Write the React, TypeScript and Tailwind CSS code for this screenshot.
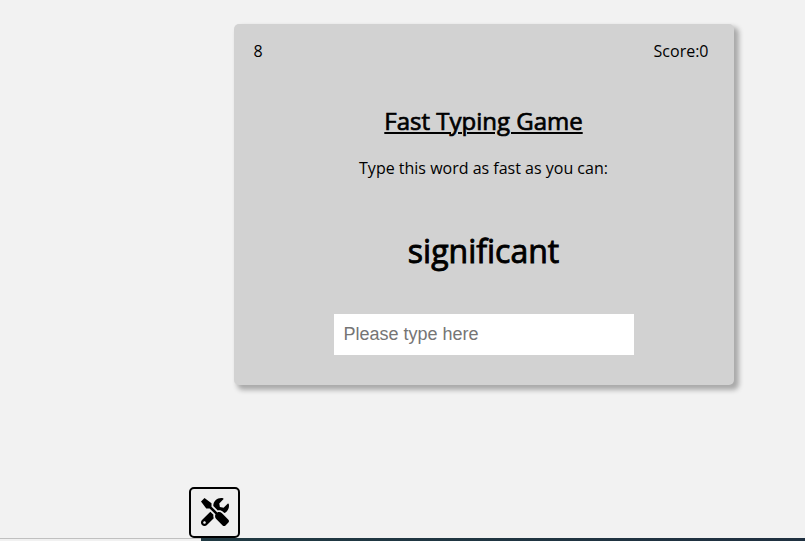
import { FaTools } from "react-icons/fa";

export default function App() {
  return (
    <div className="flex h-[541px] w-[805px] flex-col overflow-hidden bg-[#f2f2f2] pt-6 font-['Open_Sans',sans-serif] text-black">
      <main className="ml-[234px] flex h-[361px] w-[500px] shrink-0 flex-col items-center rounded-[5px] bg-[#d2d2d2] shadow-[4px_4px_5px_1px_rgba(0,0,0,0.3)]">
        <div className="flex w-full justify-between pt-[15px] pr-[25.5px] pl-[19.5px] text-base leading-6 font-normal">
          <span>8</span>
          <span>Score:0</span>
        </div>
        <h2 className="mt-[41px] pr-px text-2xl leading-[33px] font-normal [-webkit-text-stroke:0.7px_black]">
          <span className="underline decoration-2 underline-offset-2">Fast Typing Game</span>
        </h2>
        <p className="mt-[19px] pr-px text-base leading-6">Type this word as fast as you can:</p>
        <h1 className="mt-[49px] pr-px text-[32px] leading-[44px] font-normal [-webkit-text-stroke:0.9px_black]">significant</h1>
        <input
          className="mt-[41px] h-[41px] w-[300px] bg-white pr-[10px] pl-[9.5px] font-['Liberation_Sans',sans-serif] text-lg placeholder:text-[#757575]"
          placeholder="Please type here"
        />
      </main>
      <button className="mt-[102px] ml-[189px] flex h-[51px] w-[51px] shrink-0 items-center justify-center rounded-[5px] border-2 border-black bg-[#efefef] pb-px">
        <FaTools size={28} />
      </button>
      <footer className="flex h-[3px] shrink-0">
        <div className="w-[201px] border-t border-[#c0c0c0] bg-[#f1f1f1]" />
        <div className="flex-1 bg-linear-to-r from-[#203a43] to-[#1f3040]" />
      </footer>
    </div>
  );
}
